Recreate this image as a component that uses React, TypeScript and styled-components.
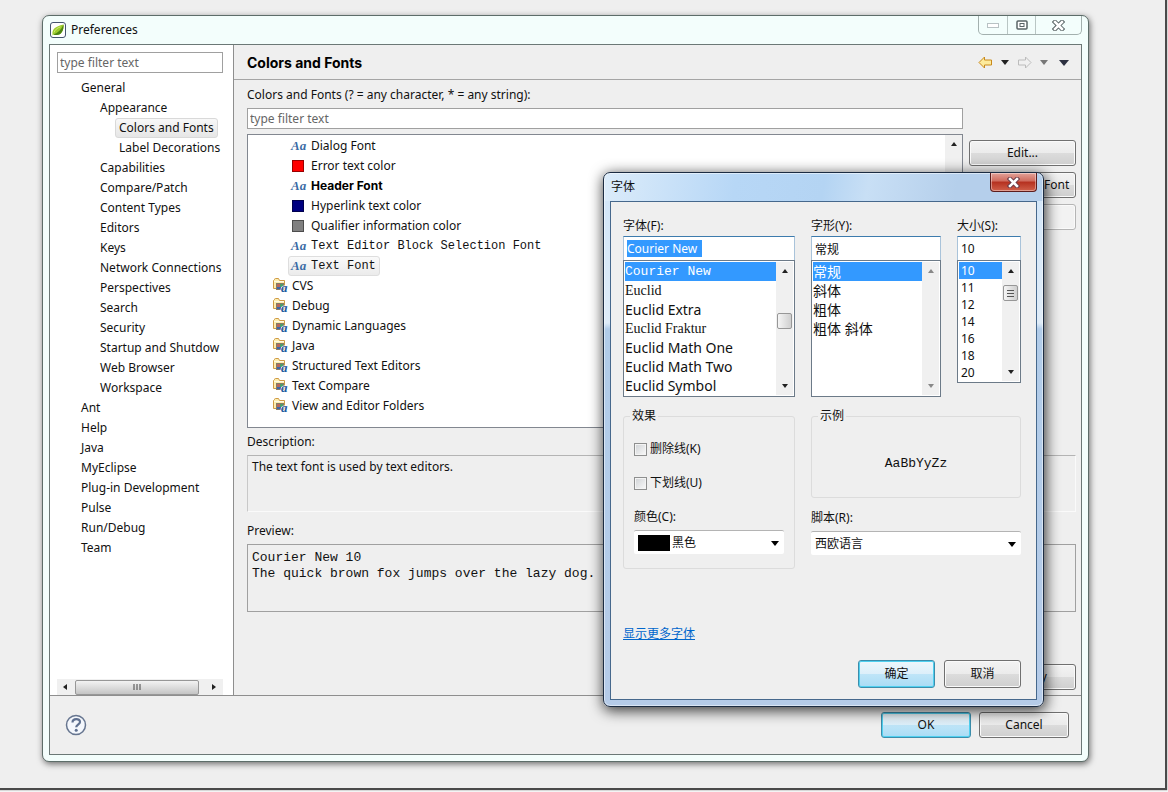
import React from "react";
import styled, { createGlobalStyle, css } from "styled-components";

const ui = `"Noto Sans", "Noto Sans CJK SC", sans-serif`;
const mono = `"Liberation Mono", monospace`;
const serif = `"Liberation Serif", serif`;

const GlobalStyle = createGlobalStyle`
  *, *::before, *::after { box-sizing: border-box; }
  body { margin: 0; background: #f4f4f4; font: 12px/20px ${ui}; color: #111; }
  ul, p, h1, h2, fieldset { margin: 0; padding: 0; }
  ul { list-style: none; }
  button, input, select { font: inherit; color: inherit; }
`;

const Desktop = styled.div`
  position: relative;
  min-height: calc(100vh - 4px);
  margin: 0 3px 4px 0;
  padding: 15px 76px 26px 42px;
  background: #efefef;
  box-shadow: 1px 1px 1px 1px #4a4a4a;
`;

const Window = styled.main`
  border: 1px solid #5d6d69;
  border-radius: 7px;
  padding: 0 6px 6px;
  background: #f3fefc;
  box-shadow: 1px 2px 6px rgba(0, 0, 0, 0.55);
`;

const TitleBar = styled.header`
  display: flex;
  align-items: center;
  height: 28px;
  gap: 5px;
  padding-left: 1px;
`;

const WindowTitle = styled.h1`
  flex: 1;
  font-size: 12px;
  font-weight: 400;
`;

const CaptionButtons = styled.div`
  display: flex;
  align-self: flex-start;
  height: 19px;
  border: 1px solid #a3b0ae;
  border-top: 0;
  border-radius: 0 0 5px 5px;
`;

const CaptionButton = styled.button<{ $wide?: boolean }>`
  display: flex;
  align-items: center;
  justify-content: center;
  width: ${(p) => (p.$wide ? 46 : 28)}px;
  padding: 0;
  border: 0;
  border-left: 1px solid #b9c6c4;
  background: none;
  &:first-child { border-left: 0; }
`;

const Client = styled.div`
  border: 1px solid #6b7876;
  background: #efefef;
`;

const Columns = styled.div`
  display: flex;
  border-bottom: 1px solid #8e8e8e;
`;

const Sidebar = styled.nav`
  display: flex;
  flex-direction: column;
  width: 184px;
  flex: none;
  padding: 7px 10px 0 7px;
  border-right: 1px solid #8e8e8e;
  background: #fff;
`;

const Field = styled.input`
  width: 100%;
  height: 21px;
  padding: 0 2px;
  border: 1px solid #a0a0a0;
  border-radius: 0;
  background: #fff;
  outline: 0;
  &::placeholder { color: #666; opacity: 1; }
`;

const NavTree = styled.ul`
  margin-top: 5px;
`;

const NavItem = styled.li<{ $depth: number; $selected?: boolean }>`
  height: 20px;
  padding-left: ${(p) => [20, 39, 58][p.$depth]}px;
  white-space: nowrap;
  span {
    display: inline-block;
    height: 20px;
    padding: 0 3px;
    line-height: 18px;
    border: 1px solid transparent;
    border-radius: 3px;
    ${(p) =>
      p.$selected &&
      css`
        border-color: #d9d9d9;
        background: linear-gradient(#f8f8f8, #e6e6e6);
      `}
  }
`;

const HScroll = styled.div`
  display: flex;
  align-items: center;
  height: 16px;
  margin-top: auto;
  padding: 0 7px 0 6px;
  background: #f0f0f0;
`;

const HThumb = styled.div`
  display: flex;
  align-items: center;
  justify-content: center;
  width: 124px;
  height: 15px;
  margin: 0 auto 0 8px;
  border: 1px solid #979797;
  border-radius: 2px;
  background: linear-gradient(#f3f3f3, #dcdcdc 50%, #c4c4c4);
`;

const Page = styled.section`
  display: flex;
  flex-direction: column;
  flex: 1;
  min-width: 0;
`;

const PageHeader = styled.header`
  display: flex;
  align-items: center;
  height: 35px;
  padding: 1px 7px 0 13px;
  border-bottom: 1px solid #a5a5a5;
`;

const PageTitle = styled.h2`
  flex: 1;
  font: 700 14px/20px Inter, sans-serif;
  color: #000;
`;

const NavButton = styled.button<{ $w: number }>`
  display: flex;
  align-items: center;
  justify-content: center;
  width: ${(p) => p.$w}px;
  height: 20px;
  padding: 0;
  border: 0;
  background: none;
`;

const PageBody = styled.div`
  display: flex;
  flex-direction: column;
  flex: 1;
  padding: 5px 5px 5px 13px;
`;

const Label = styled.label`
  display: block;
  line-height: 20px;
`;

const FontsGrid = styled.div`
  display: grid;
  grid-template-columns: minmax(0, 1fr) 107px;
  gap: 5px 6px;
  margin-top: 3px;
`;

const SideButtons = styled.div`
  grid-column: 2;
  display: flex;
  flex-direction: column;
  gap: 6px;
  padding-top: 6px;
`;

const Button = styled.button<{ $default?: boolean; $w?: number; $h?: number }>`
  width: ${(p) => (p.$w ? `${p.$w}px` : "auto")};
  height: ${(p) => p.$h ?? 26}px;
  padding: 0;
  border: 1px solid #707070;
  border-radius: 3px;
  background: linear-gradient(#f3f3f3, #ebebeb 50%, #dcdcdc 50%, #cfcfcf);
  box-shadow: inset 0 0 0 1px #fafafa;
  white-space: nowrap;
  ${(p) =>
    p.$default &&
    css`
      border-color: #3c8dab;
      background: linear-gradient(#edf7fc, #dceffa 50%, #bfe5f8 50%, #a9dcf5);
      box-shadow: inset 0 0 0 1px #4fd0f0;
    `}
  &:disabled {
    border-color: #b5b5b5;
    background: #f2f2f2;
    color: #888;
  }
`;

const ListFrame = styled.div`
  display: flex;
  height: 294px;
  border: 1px solid #828790;
  background: #fff;
`;

const FontTree = styled.ul`
  flex: 1;
  padding: 1px 0 0 23px;
`;

const FontItem = styled.li<{ $leaf?: boolean; $selected?: boolean; $face?: string }>`
  display: flex;
  align-items: center;
  gap: ${(p) => (p.$leaf ? 4 : 3)}px;
  width: max-content;
  height: 20px;
  margin-left: ${(p) => (p.$leaf ? 17 : 0)}px;
  padding: 0 3px 0 ${(p) => (p.$leaf ? 2 : 0)}px;
  border: 1px solid transparent;
  border-radius: 3px;
  line-height: 18px;
  ${(p) => p.$face === "mono" && css`font-family: ${mono};`}
  ${(p) => p.$face === "bold" && css`font-family: Inter, sans-serif; font-weight: 700; color: #000;`}
  ${(p) =>
    p.$selected &&
    css`
      border-color: #dedede;
      background: linear-gradient(#fafafa, #ebebeb);
    `}
`;

const FontGlyph = styled.span`
  width: 16px;
  font: italic 700 13px/18px ${serif};
  color: #3b6ba5;
`;

const Swatch = styled.span<{ $color: string }>`
  width: 12px;
  height: 12px;
  margin: 0 3px 0 1px;
  border: 1px solid rgba(0, 0, 0, 0.4);
  background: ${(p) => p.$color};
`;

const VScroll = styled.div`
  display: flex;
  flex-direction: column;
  align-items: center;
  width: 17px;
  padding: 7px 0;
  background: #f0f0f0;
`;

const Description = styled.div`
  height: 57px;
  margin-top: 3px;
  padding: 1px 4px;
  border: 1px solid #fafafa;
  border-top-color: #b4b4b4;
  border-left-color: #c8c8c8;
`;

const Preview = styled.pre`
  height: 68px;
  margin: 3px 0 0;
  padding: 5px 4px;
  border: 1px solid #a0a0a0;
  font: 13px/16px ${mono};
`;

const Section = styled.div<{ $top: number }>`
  margin-top: ${(p) => p.$top}px;
`;

const ApplyRow = styled.div`
  display: flex;
  justify-content: flex-end;
  margin-top: 52px;
`;

const Footer = styled.footer`
  display: flex;
  align-items: center;
  justify-content: space-between;
  height: 58px;
  padding: 0 12px 0 15px;
`;

const ButtonRow = styled.div<{ $gap: number }>`
  display: flex;
  justify-content: flex-end;
  gap: ${(p) => p.$gap}px;
`;

const HelpButton = styled.button`
  display: flex;
  padding: 0;
  border: 0;
  background: none;
`;

const Dialog = styled.section`
  position: absolute;
  top: 172px;
  left: 603px;
  width: 441px;
  padding: 0 6px 6px;
  border: 1px solid #1c2c42;
  border-radius: 7px;
  background: linear-gradient(100deg, #dcecfa 0, #b7d7f6 30%, #b4d4f3 50%, #c8dff5 60%, #b5cfeb 80%) top / 100% 28px no-repeat,
    linear-gradient(#d3e6f8 28px, #dfecf8 150px, #b1cce9 156px, #b5cbe8);
  box-shadow: inset 0 0 0 1px rgba(255, 255, 255, 0.5), 1px 3px 14px 1px rgba(0, 0, 0, 0.75);
`;

const DialogTitleBar = styled.header`
  display: flex;
  align-items: center;
  justify-content: space-between;
  height: 28px;
  padding-left: 1px;
`;

const DialogClose = styled.button`
  display: flex;
  align-items: center;
  justify-content: center;
  align-self: flex-start;
  width: 47px;
  height: 19px;
  padding: 0;
  border: 1px solid #5c1d1d;
  border-top: 0;
  border-radius: 0 0 4px 4px;
  background: linear-gradient(#e3a299, #cf6a5c 45%, #b5301f 50%, #d0604a);
  box-shadow: inset 0 0 0 1px rgba(255, 255, 255, 0.4);
`;

const DialogClient = styled.div`
  padding: 14px 15px 11px 12px;
  border: 1px solid #46688c;
  background: #efefef;
`;

const DialogColumns = styled.div`
  display: flex;
  gap: 16px;
`;

const ComboColumn = styled.div<{ $w: number }>`
  width: ${(p) => p.$w}px;
`;

const ComboInput = styled.input`
  display: block;
  width: 100%;
  height: 24px;
  padding: 0 3px;
  border: 1px solid #a9c3da;
  border-top-color: #3d7bad;
  border-bottom: 0;
  border-radius: 0;
  background: #fff;
  outline: 0;
`;

const SelectedInput = styled.div`
  display: flex;
  align-items: center;
  height: 24px;
  padding: 0 3px;
  border: 1px solid #a9c3da;
  border-top-color: #3d7bad;
  border-bottom: 0;
  background: #fff;
  input {
    width: 75px;
    height: 17px;
    padding: 0;
    border: 0;
    outline: 0;
    background: #3399ff;
    color: #fff;
  }
`;

const OptionBox = styled.div`
  display: flex;
  padding: 1px;
  border: 1px solid #6c7a88;
  background: #fff;
`;

const Options = styled.ul<{ $row: number }>`
  flex: 1;
  min-width: 0;
  li {
    height: ${(p) => p.$row}px;
    line-height: ${(p) => p.$row}px;
    white-space: nowrap;
  }
  li[aria-selected="true"] { background: #3399ff; color: #fff; }
`;

const Option = styled.li<{ $size?: number; $family?: string }>`
  padding: 0 ${(p) => (p.$size ? 0 : 2)}px;
  font-size: ${(p) => p.$size ?? 12}px;
  font-family: ${(p) => p.$family ?? "inherit"};
`;

const VThumb = styled.div<{ $top: number }>`
  display: flex;
  align-items: center;
  justify-content: center;
  width: 15px;
  height: 16px;
  margin-top: ${(p) => p.$top}px;
  border: 1px solid #979797;
  border-radius: 2px;
  background: linear-gradient(90deg, #f5f5f5, #cfcfcf);
`;

const Push = styled.span`
  margin-top: auto;
  display: flex;
`;

const Group = styled.fieldset<{ $h: number; $w: number }>`
  width: ${(p) => p.$w}px;
  height: ${(p) => p.$h}px;
  padding: 13px 10px 0;
  border: 1px solid #dcdcdc;
  border-radius: 3px;
  legend {
    margin-left: -4px;
    padding: 0 2px;
    line-height: 20px;
  }
`;

const CheckRow = styled.label`
  display: flex;
  align-items: center;
  gap: 3px;
  height: 20px;
  margin-bottom: 14px;
  input {
    appearance: none;
    width: 13px;
    height: 13px;
    margin: 0;
    border: 1px solid #8e8f8f;
    background: linear-gradient(135deg, #cfd2d5, #fafafa);
    box-shadow: inset 0 0 0 1px #f4f4f4;
  }
`;

const SelectBox = styled.div`
  position: relative;
  display: flex;
  align-items: center;
  height: 24px;
  margin-top: 3px;
  padding: 0 4px;
  border-top: 1px solid #b4b4b4;
  border-radius: 2px;
  background: #fff;
  select {
    flex: 1;
    min-width: 0;
    height: 22px;
    padding: 0;
    border: 0;
    outline: 0;
    appearance: none;
    background: none;
  }
  svg {
    position: absolute;
    right: 5px;
    top: 10px;
    pointer-events: none;
  }
`;

const ColorChip = styled.span`
  width: 32px;
  height: 16px;
  margin-right: 2px;
  background: #000;
`;

const Lower = styled(DialogColumns)`
  align-items: flex-start;
  margin-top: 9px;
`;

const SampleColumn = styled.div`
  width: 210px;
`;

const Sample = styled.p`
  margin-top: 15px;
  text-align: center;
  font: 13px/20px ${mono};
`;

const MoreFonts = styled.a`
  display: block;
  width: max-content;
  margin: 55px 0 16px;
  color: #0066cc;
`;

type Dir = "up" | "down" | "left" | "right";
const points: Record<Dir, string> = {
  up: "0,4 4,0 8,4",
  down: "0,0 8,0 4,4",
  left: "4,0 4,8 0,4",
  right: "0,0 4,4 0,8",
};

function Arrow({ dir, color = "#222", size = 6 }: { dir: Dir; color?: string; size?: number }) {
  const flat = dir === "up" || dir === "down";
  return (
    <svg
      width={flat ? size : size / 2 + 1}
      height={flat ? size / 2 + 1 : size}
      viewBox={flat ? "0 0 8 4" : "0 0 4 8"}
      preserveAspectRatio="none"
      aria-hidden="true"
    >
      <polygon points={points[dir]} fill={color} />
    </svg>
  );
}

function LeafIcon() {
  return (
    <svg width="16" height="16" viewBox="0 0 16 16" aria-hidden="true">
      <rect x="0.5" y="0.5" width="15" height="15" rx="2.5" fill="#fff" stroke="#44546e" />
      <path d="M2.500 12C2 7.500 5 4.500 13.500 2.500C14 8 11.500 13 6.500 13C5 13 4 12.700 3.500 12.500L2.500 13.500Z" fill="#9bcb2b" />
      <path d="M3.500 12.400C8 11 11.500 7.500 13.500 2.500C14 8 11.500 13 6.500 13C5 13 4 12.700 3.500 12.400Z" fill="#4c8512" />
      <path d="M4 10.500C4.800 8 7 6 10.500 4.800" stroke="#d5ee7c" fill="none" strokeWidth="0.9" />
    </svg>
  );
}

function FolderIcon() {
  return (
    <svg width="17" height="20" viewBox="0 0 17 20" aria-hidden="true">
      <path d="M1.500 12.500V4.500L2.500 3.500V3L3.500 2.500H6.500L7.500 4.500H12.500V12.500Z" fill="#fdeeb0" stroke="#cf9a45" />
      <path d="M2 5.500H12" stroke="#fffbe6" />
      <rect x="4.500" y="7.500" width="7" height="6" fill="#fff" stroke="#857c68" />
      <path d="M5 8h3v3H5z" fill="#b9695a" />
      <path d="M8 8h3v3H8z" fill="#4f9d67" />
      <path d="M5 11h4v2H5z" fill="#3e66a8" />
      <text x="9" y="16" fontFamily="Liberation Serif" fontStyle="italic" fontWeight="700" fontSize="13" fill="#1f5a9e" stroke="#fff" strokeWidth="1" paintOrder="stroke">a</text>
    </svg>
  );
}

function HistoryArrow({ back }: { back?: boolean }) {
  return (
    <svg width="15" height="13" viewBox="0 0 15 13" aria-hidden="true">
      <path
        d={back ? "M1 6.500L6.500 1V4H13.500V9H6.500V12Z" : "M14 6.500L8.500 1V4H1.500V9H8.500V12Z"}
        fill={back ? "#fdeb9c" : "#f0f0f0"}
        stroke={back ? "#c98a1b" : "#bcbcbc"}
        strokeLinejoin="round"
      />
    </svg>
  );
}

function CrossIcon({ light }: { light?: boolean }) {
  return (
    <svg width="13" height="11" viewBox="0 0 13 11" aria-hidden="true">
      <path d="M3 2L10 9M10 2L3 9" stroke={light ? "#6b3b48" : "#596466"} strokeWidth="4.500" strokeLinecap="square" />
      <path d="M3 2L10 9M10 2L3 9" stroke="#fff" strokeWidth="2.500" strokeLinecap="square" />
    </svg>
  );
}

const nav: [string, number][] = [
  ["General", 0],
  ["Appearance", 1],
  ["Colors and Fonts", 2],
  ["Label Decorations", 2],
  ["Capabilities", 1],
  ["Compare/Patch", 1],
  ["Content Types", 1],
  ["Editors", 1],
  ["Keys", 1],
  ["Network Connections", 1],
  ["Perspectives", 1],
  ["Search", 1],
  ["Security", 1],
  ["Startup and Shutdow", 1],
  ["Web Browser", 1],
  ["Workspace", 1],
  ["Ant", 0],
  ["Help", 0],
  ["Java", 0],
  ["MyEclipse", 0],
  ["Plug-in Development", 0],
  ["Pulse", 0],
  ["Run/Debug", 0],
  ["Team", 0],
];

const leaves: { name: string; color?: string; face?: string; selected?: boolean }[] = [
  { name: "Dialog Font" },
  { name: "Error text color", color: "#ff0000" },
  { name: "Header Font", face: "bold" },
  { name: "Hyperlink text color", color: "#000080" },
  { name: "Qualifier information color", color: "#808080" },
  { name: "Text Editor Block Selection Font", face: "mono" },
  { name: "Text Font", face: "mono", selected: true },
];

const folders = [
  "CVS",
  "Debug",
  "Dynamic Languages",
  "Java",
  "Structured Text Editors",
  "Text Compare",
  "View and Editor Folders",
];

const families: { name: string; family?: string; size?: number }[] = [
  { name: "Courier New", family: mono, size: 13 },
  { name: "Euclid", family: serif },
  { name: "Euclid Extra" },
  { name: "Euclid Fraktur", family: serif },
  { name: "Euclid Math One" },
  { name: "Euclid Math Two" },
  { name: "Euclid Symbol" },
];

const styles = ["常规", "斜体", "粗体", "粗体 斜体"];
const sizes = ["10", "11", "12", "14", "16", "18", "20"];

function FontDialog() {
  return (
    <Dialog role="dialog" aria-labelledby="font-title">
      <DialogTitleBar>
        <WindowTitle as="h2" id="font-title">字体</WindowTitle>
        <DialogClose aria-label="关闭"><CrossIcon light /></DialogClose>
      </DialogTitleBar>
      <DialogClient>
        <DialogColumns>
          <ComboColumn $w={172}>
            <Label htmlFor="family">字体(F):</Label>
            <SelectedInput><input id="family" defaultValue="Courier New" /></SelectedInput>
            <OptionBox>
              <Options $row={19} role="listbox" aria-label="字体">
                {families.map((f, i) => (
                  <Option key={f.name} role="option" aria-selected={i === 0} $size={f.size ?? 14} $family={f.family}>
                    {f.name}
                  </Option>
                ))}
              </Options>
              <VScroll>
                <Arrow dir="up" />
                <VThumb $top={40} />
                <Push><Arrow dir="down" /></Push>
              </VScroll>
            </OptionBox>
          </ComboColumn>
          <ComboColumn $w={130}>
            <Label htmlFor="style">字形(Y):</Label>
            <ComboInput id="style" defaultValue="常规" />
            <OptionBox>
              <Options $row={19} role="listbox" aria-label="字形">
                {styles.map((s, i) => (
                  <Option key={s} role="option" aria-selected={i === 0} $size={14}>{s}</Option>
                ))}
              </Options>
              <VScroll style={{ minHeight: 133 }}>
                <Arrow dir="up" color="#888" />
                <Push><Arrow dir="down" color="#888" /></Push>
              </VScroll>
            </OptionBox>
          </ComboColumn>
          <ComboColumn $w={64}>
            <Label htmlFor="size">大小(S):</Label>
            <ComboInput id="size" defaultValue="10" />
            <OptionBox>
              <Options $row={17} role="listbox" aria-label="大小">
                {sizes.map((s, i) => (
                  <Option key={s} role="option" aria-selected={i === 0}>{s}</Option>
                ))}
              </Options>
              <VScroll>
                <Arrow dir="up" />
                <VThumb $top={12}>
                  <svg width="7" height="7" aria-hidden="true"><path d="M0 .5h7M0 3.500h7M0 6.500h7" stroke="#555" /></svg>
                </VThumb>
                <Push><Arrow dir="down" /></Push>
              </VScroll>
            </OptionBox>
          </ComboColumn>
        </DialogColumns>
        <Lower>
          <Group $w={172} $h={163}>
            <legend>效果</legend>
            <CheckRow><input type="checkbox" />删除线(K)</CheckRow>
            <CheckRow><input type="checkbox" />下划线(U)</CheckRow>
            <Label htmlFor="color">颜色(C):</Label>
            <SelectBox>
              <ColorChip />
              <select id="color"><option>黑色</option></select>
              <Arrow dir="down" size={8} color="#000" />
            </SelectBox>
          </Group>
          <SampleColumn>
            <Group $w={210} $h={92}>
              <legend>示例</legend>
              <Sample>AaBbYyZz</Sample>
            </Group>
            <Section $top={10}>
              <Label htmlFor="script">脚本(R):</Label>
              <SelectBox>
                <select id="script"><option>西欧语言</option></select>
                <Arrow dir="down" size={8} color="#000" />
              </SelectBox>
            </Section>
          </SampleColumn>
        </Lower>
        <MoreFonts href="#more">显示更多字体</MoreFonts>
        <ButtonRow $gap={9}>
          <Button $default $w={77} $h={28}>确定</Button>
          <Button $w={77} $h={28}>取消</Button>
        </ButtonRow>
      </DialogClient>
    </Dialog>
  );
}

export default function App() {
  return (
    <>
      <GlobalStyle />
      <Desktop>
        <Window>
          <TitleBar>
            <LeafIcon />
            <WindowTitle>Preferences</WindowTitle>
            <CaptionButtons>
              <CaptionButton aria-label="Minimize">
                <svg width="12" height="5" aria-hidden="true"><rect x=".5" y=".5" width="11" height="4" fill="#fff" stroke="#b8c2c4" /></svg>
              </CaptionButton>
              <CaptionButton aria-label="Maximize">
                <svg width="12" height="10" aria-hidden="true">
                  <rect x="1" y="1" width="10" height="8" rx="1" fill="#fff" stroke="#596466" strokeWidth="1.500" />
                  <rect x="4" y="3.500" width="4" height="3" fill="#fff" stroke="#596466" />
                </svg>
              </CaptionButton>
              <CaptionButton $wide aria-label="Close"><CrossIcon /></CaptionButton>
            </CaptionButtons>
          </TitleBar>
          <Client>
            <Columns>
              <Sidebar>
                <Field placeholder="type filter text" aria-label="Filter preferences" />
                <NavTree role="tree">
                  {nav.map(([name, depth]) => (
                    <NavItem key={name + depth} role="treeitem" $depth={depth} $selected={name === "Colors and Fonts"}>
                      <span>{name}</span>
                    </NavItem>
                  ))}
                </NavTree>
                <HScroll>
                  <Arrow dir="left" />
                  <HThumb>
                    <svg width="8" height="6" aria-hidden="true"><path d="M1 0v6M4 0v6M7 0v6" stroke="#444" /></svg>
                  </HThumb>
                  <Arrow dir="right" />
                </HScroll>
              </Sidebar>
              <Page>
                <PageHeader>
                  <PageTitle>Colors and Fonts</PageTitle>
                  <NavButton $w={18} aria-label="Back"><HistoryArrow back /></NavButton>
                  <NavButton $w={21} aria-label="Back history"><Arrow dir="down" size={8} /></NavButton>
                  <NavButton $w={19} aria-label="Forward"><HistoryArrow /></NavButton>
                  <NavButton $w={20} aria-label="Forward history"><Arrow dir="down" size={8} color="#777" /></NavButton>
                  <NavButton $w={20} aria-label="View menu"><Arrow dir="down" size={10} color="#2c3040" /></NavButton>
                </PageHeader>
                <PageBody>
                  <Label htmlFor="fonts-filter">Colors and Fonts (? = any character, * = any string):</Label>
                  <FontsGrid>
                    <Field id="fonts-filter" placeholder="type filter text" />
                    <span />
                    <ListFrame>
                      <FontTree role="tree">
                        {leaves.map((l) => (
                          <FontItem key={l.name} role="treeitem" $leaf $face={l.face} $selected={l.selected}>
                            {l.color ? <Swatch $color={l.color} /> : <FontGlyph aria-hidden="true">Aa</FontGlyph>}
                            {l.name}
                          </FontItem>
                        ))}
                        {folders.map((f) => (
                          <FontItem key={f} role="treeitem"><FolderIcon />{f}</FontItem>
                        ))}
                      </FontTree>
                      <VScroll><Arrow dir="up" /></VScroll>
                    </ListFrame>
                    <SideButtons>
                      <Button>Edit...</Button>
                      <Button>Use System Font</Button>
                      <Button disabled>Reset</Button>
                    </SideButtons>
                  </FontsGrid>
                  <Section $top={4}>
                    <Label as="p">Description:</Label>
                    <Description>The text font is used by text editors.</Description>
                  </Section>
                  <Section $top={9}>
                    <Label as="p">Preview:</Label>
                    <Preview>{"Courier New 10\nThe quick brown fox jumps over the lazy dog."}</Preview>
                  </Section>
                  <ApplyRow><Button $w={90}>Apply</Button></ApplyRow>
                </PageBody>
              </Page>
            </Columns>
            <Footer>
              <HelpButton aria-label="Help">
                <svg width="22" height="22" viewBox="0 0 22 22" aria-hidden="true">
                  <circle cx="11" cy="11" r="9.500" fill="#f4f7fc" stroke="#66758f" strokeWidth="1.500" />
                  <path d="M7.500 8.500c0-4.500 7.500-4.500 7.500-.5 0 2.500-3.800 2.800-3.800 5.200" fill="none" stroke="#5f7090" strokeWidth="2.200" />
                  <circle cx="11.200" cy="16.200" r="1.500" fill="#5f7090" />
                </svg>
              </HelpButton>
              <ButtonRow $gap={8}>
                <Button $default $w={90}>OK</Button>
                <Button $w={90}>Cancel</Button>
              </ButtonRow>
            </Footer>
          </Client>
        </Window>
        <FontDialog />
      </Desktop>
    </>
  );
}
